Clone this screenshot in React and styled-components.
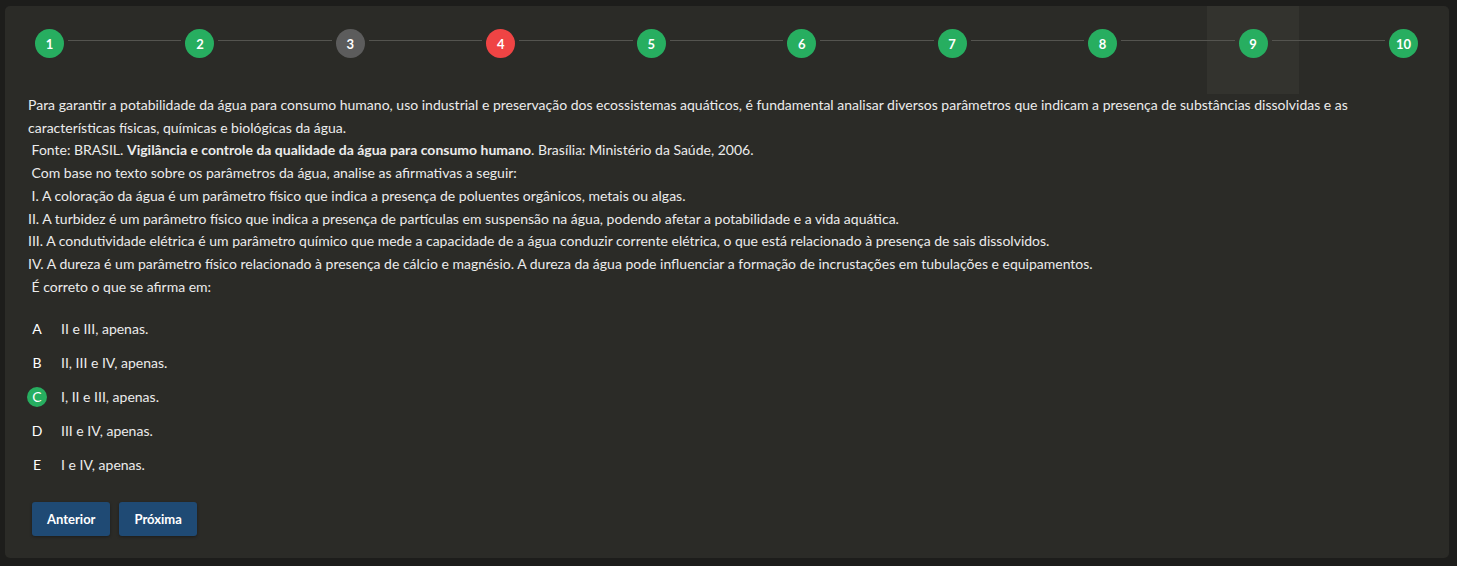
import React from "react";
import styled, { createGlobalStyle } from "styled-components";

const Global = createGlobalStyle`
  html, body { margin: 0; padding: 0; background: #1d1d1b; }
  body { font-family: "Lato", "Noto Sans", sans-serif; }
`;

const Page = styled.div`
  padding: 6px 8px 7px 5px;
  background: #1d1d1b;
  min-height: 566px;
  box-sizing: border-box;
`;

const Card = styled.div`
  position: relative;
  z-index: 0;
  background: #2b2b27;
  border-radius: 5px;
  padding-bottom: 22px;
  color: #ececec;
`;

const Stepper = styled.div`
  display: flex;
  align-items: flex-start;
  height: 88px;
  padding: 0 27px 0 26px;
`;

const Step = styled.div`
  position: relative;
  width: 37px;
  height: 88px;
  display: flex;
  justify-content: center;
  flex: none;
  &::before {
    content: "";
    display: ${(p) => (p.$active ? "block" : "none")};
    position: absolute;
    top: 0;
    bottom: 0;
    left: 50%;
    width: 92px;
    transform: translateX(-50%);
    background: #33332e;
    z-index: -1;
  }
`;

const Dot = styled.div`
  margin-top: 23px;
  width: 29px;
  height: 29px;
  border-radius: 50%;
  background: ${(p) => p.$color};
  color: #fff;
  font-weight: 700;
  font-size: 13px;
  display: flex;
  align-items: center;
  justify-content: center;
`;

const Connector = styled.div`
  flex: 1;
  height: 1px;
  margin-top: 34px;
  background: #54544f;
`;

const Content = styled.div`
  padding: 0 23px;
  font-size: 14px;
  line-height: 22.7px;
`;

const Line = styled.div`
  white-space: pre-wrap;
`;

const Options = styled.div`
  margin-top: 14px;
  margin-left: -1px;
`;

const Option = styled.div`
  display: flex;
  align-items: center;
  height: 34px;
  gap: 14px;
`;

const Letter = styled.span`
  width: 20px;
  height: 20px;
  border-radius: 50%;
  display: flex;
  align-items: center;
  justify-content: center;
  background: ${(p) => (p.$selected ? "#27ae60" : "transparent")};
  color: #fff;
  font-size: 14px;
`;

const Buttons = styled.div`
  display: flex;
  gap: 9px;
  margin-top: 20px;
  padding-left: 4px;
`;

const Button = styled.button`
  height: 34px;
  padding: 0 15px;
  border: none;
  border-radius: 3px;
  background: #1f4a74;
  color: #fff;
  font-family: "Lato", "Noto Sans", sans-serif;
  font-weight: 700;
  font-size: 13px;
  box-shadow: 0 1px 3px rgba(0, 0, 0, 0.35);
  cursor: pointer;
`;

const steps = [
  { n: 1, c: "#27ae60" },
  { n: 2, c: "#27ae60" },
  { n: 3, c: "#5c5c5c" },
  { n: 4, c: "#ef4444" },
  { n: 5, c: "#27ae60" },
  { n: 6, c: "#27ae60" },
  { n: 7, c: "#27ae60" },
  { n: 8, c: "#27ae60" },
  { n: 9, c: "#27ae60", active: true },
  { n: 10, c: "#27ae60" },
];

const options = [
  ["A", "II e III, apenas."],
  ["B", "II, III e IV, apenas."],
  ["C", "I, II e III, apenas.", true],
  ["D", "III e IV, apenas."],
  ["E", "I e IV, apenas."],
];

export default function App() {
  return (
    <Page>
      <Global />
      <Card>
        <Stepper>
          {steps.map((s, i) => (
            <React.Fragment key={s.n}>
              {i > 0 && <Connector />}
              <Step $active={s.active}>
                <Dot $color={s.c}>{s.n}</Dot>
              </Step>
            </React.Fragment>
          ))}
        </Stepper>
        <Content>
          <Line>
            Para garantir a potabilidade da água para consumo humano, uso industrial e preservação dos ecossistemas aquáticos, é fundamental analisar diversos parâmetros que indicam a presença de substâncias dissolvidas e as características físicas, químicas e biológicas da água.
          </Line>
          <Line>
            {" Fonte: BRASIL. "}
            <b>Vigilância e controle da qualidade da água para consumo humano</b>. Brasília: Ministério da Saúde, 2006.
          </Line>
          <Line>{" Com base no texto sobre os parâmetros da água, analise as afirmativas a seguir:"}</Line>
          <Line>{" I. A coloração da água é um parâmetro físico que indica a presença de poluentes orgânicos, metais ou algas."}</Line>
          <Line>II. A turbidez é um parâmetro físico que indica a presença de partículas em suspensão na água, podendo afetar a potabilidade e a vida aquática.</Line>
          <Line>III. A condutividade elétrica é um parâmetro químico que mede a capacidade de a água conduzir corrente elétrica, o que está relacionado à presença de sais dissolvidos.</Line>
          <Line>IV. A dureza é um parâmetro físico relacionado à presença de cálcio e magnésio. A dureza da água pode influenciar a formação de incrustações em tubulações e equipamentos.</Line>
          <Line>{" É correto o que se afirma em:"}</Line>
          <Options>
            {options.map(([l, t, sel]) => (
              <Option key={l}>
                <Letter $selected={sel}>{l}</Letter>
                <span>{t}</span>
              </Option>
            ))}
          </Options>
          <Buttons>
            <Button>Anterior</Button>
            <Button>Próxima</Button>
          </Buttons>
        </Content>
      </Card>
    </Page>
  );
}
